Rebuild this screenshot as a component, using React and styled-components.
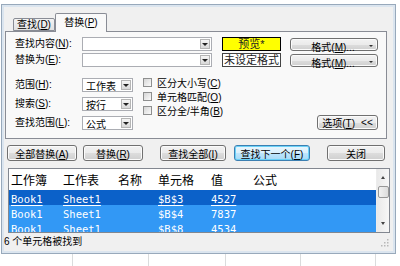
import React from 'react';
import styled, { createGlobalStyle } from 'styled-components';

const GlobalStyle = createGlobalStyle`
  * { box-sizing: border-box; }
  html, body { margin: 0; padding: 0; background: #fff; }
  body {
    width: 400px;
    height: 266px;
    overflow: hidden;
    font-family: "Liberation Sans", "Noto Sans CJK SC", sans-serif;
    color: #000;
  }
  u { text-decoration-thickness: 1px; text-underline-offset: 1px; }
`;

const results = [
  { book: 'Book1', sheet: 'Sheet1', name: '', cell: '$B$3', value: '4527', active: true },
  { book: 'Book1', sheet: 'Sheet1', name: '', cell: '$B$4', value: '7837' },
  { book: 'Book1', sheet: 'Sheet1', name: '', cell: '$B$8', value: '4534' },
];

const Page = styled.div`
  width: 400px;
  height: 266px;
  display: flex;
  flex-direction: column;
  background: #fff;
`;

const Window = styled.div`
  margin: 4px 0 0 1px;
  width: 395px;
  height: 250px;
  flex-shrink: 0;
  border: 1px solid #98a9bb;
  box-shadow: inset 0 0 0 2px #dbe5ef;
  background: #f0f0f0;
  padding: 8px 5px 0 3px;
  display: flex;
  flex-direction: column;
`;

const TabRow = styled.div`
  display: flex;
  align-items: flex-end;
  height: 18px;
  padding-left: 8px;
  position: relative;
  z-index: 1;
`;

const Tab = styled.div`
  height: ${p => (p.$active ? '19px' : '13px')};
  width: ${p => (p.$active ? '52px' : '42px')};
  margin-bottom: ${p => (p.$active ? '-1px' : '0')};
  border: 1px solid #898c95;
  border-bottom: ${p => (p.$active ? 'none' : '1px solid #898c95')};
  border-radius: 2px 2px 0 0;
  background: ${p => (p.$active ? '#f9f9f9' : 'linear-gradient(#f3f3f3, #e1e1e1)')};
  font-size: 10px;
  line-height: 1;
  display: flex;
  align-items: ${p => (p.$active ? 'flex-start' : 'center')};
  padding-top: ${p => (p.$active ? '4px' : '0')};
  justify-content: center;
`;

const Panel = styled.div`
  margin-right: 3px;
  height: 108px;
  border: 1px solid #898c95;
  background: #f9f9f9;
  padding: 5px 8px 0 9px;
`;

const TopGrid = styled.div`
  display: grid;
  grid-template-columns: 67px 130px 69px 97px;
  grid-auto-rows: 14px;
  row-gap: 2px;
  align-items: center;
`;

const Label = styled.span`
  font-size: 10px;
  line-height: 14px;
  white-space: nowrap;
`;

const Combo = styled.div`
  height: 14px;
  border: 1px solid #abadb3;
  background: #fff;
  display: flex;
  align-items: center;
  justify-content: space-between;
  padding: 0 1px 0 3px;
  font-size: 10px;
`;

const DropBtn = styled.span`
  width: 10px;
  height: 10px;
  border: 1px solid #b5b5b5;
  background: linear-gradient(#f6f6f6, #d8d8d8);
  display: flex;
  align-items: center;
  justify-content: center;
  &::after {
    content: '';
    border-left: 3px solid transparent;
    border-right: 3px solid transparent;
    border-top: 3px solid #222;
  }
`;

const FormatBox = styled.div`
  justify-self: end;
  width: 59px;
  height: 14px;
  border: 1px solid ${p => (p.$preview ? '#000' : '#444')};
  background: ${p => (p.$preview ? '#ffff00' : '#fff')};
  color: #222;
  font-size: 11px;
  line-height: 12px;
  text-align: center;
`;

const Button = styled.div`
  height: ${p => p.$h || 16}px;
  width: ${p => p.$w}px;
  margin-left: ${p => p.$ml || 0}px;
  border: 1px solid ${p => (p.$default ? '#3c7fb1' : '#707070')};
  border-radius: 3px;
  background: ${p =>
    p.$default
      ? 'linear-gradient(#eaf6fd 0%, #d9f0fc 50%, #bee6fd 51%, #a7d9f5 100%)'
      : 'linear-gradient(#f2f2f2 0%, #ebebeb 50%, #dddddd 51%, #cfcfcf 100%)'};
  box-shadow: inset 0 0 0 1px ${p => (p.$default ? '#6ad2f8' : '#fbfbfb')};
  font-size: 10px;
  display: flex;
  align-items: center;
  justify-content: center;
  white-space: nowrap;
`;

const FormatButton = styled(Button)`
  justify-self: end;
  display: grid;
  grid-template-columns: 1fr 8px;
  text-align: center;
  padding-left: 6px;
`;

const Caret = styled.span`
  width: 0;
  height: 0;
  border-left: 2px solid transparent;
  border-right: 2px solid transparent;
  border-top: 2px solid #333;
`;

const Lower = styled.div`
  display: flex;
  margin-top: 11px;
`;

const LeftGrid = styled.div`
  display: grid;
  grid-template-columns: 67px 51px;
  grid-auto-rows: 14px;
  row-gap: 5px;
  align-items: center;
`;

const Checks = styled.div`
  display: flex;
  flex-direction: column;
  margin: -3px 0 0 10px;
`;

const CheckRow = styled.label`
  height: 14px;
  display: flex;
  align-items: center;
  gap: 5px;
  font-size: 10px;
  white-space: nowrap;
`;

const Box = styled.span`
  width: 9px;
  height: 9px;
  border: 1px solid #8e8f8f;
  background: linear-gradient(135deg, #d6d6d6, #fbfbfb);
`;

const OptionsButton = styled(Button)`
  margin-left: auto;
  align-self: flex-end;
  gap: 6px;
`;

const ButtonRow = styled.div`
  display: flex;
  margin-top: 6px;
  padding-left: 2px;
`;

const List = styled.div`
  margin: 7px 0 0 3px;
  height: 65px;
  border: 1px solid #828790;
  background: #fff;
  display: flex;
  overflow: hidden;
`;

const Table = styled.div`
  flex: 1;
  overflow: hidden;
`;

const Row = styled.div`
  display: grid;
  grid-template-columns: 52px 55px 40px 53px 42px 1fr;
  height: ${p => (p.$head ? 21 : 15)}px;
  align-items: center;
  background: ${p => (p.$head ? '#fff' : p.$active ? '#0b61c9' : '#3298f5')};
  color: ${p => (p.$head ? '#000' : '#fff')};
`;

const HeadCell = styled.span`
  font-family: "Noto Sans CJK SC", sans-serif;
  font-size: 12px;
  padding-left: 2px;
`;

const Cell = styled.span`
  font-family: "DejaVu Sans Mono", "Liberation Mono", monospace;
  font-size: 10.5px;
  line-height: 15px;
  padding: 2px 0 0 2px;
  text-decoration: ${p => (p.$link ? 'underline' : 'none')};
  text-underline-offset: 2px;
`;

const ScrollBar = styled.div`
  width: 13px;
  background: linear-gradient(90deg, #e9e9e9, #f7f7f7);
  border-left: 1px solid #ececec;
  display: flex;
  flex-direction: column;
  align-items: center;
`;

const Arrow = styled.div`
  height: 17px;
  width: 100%;
  display: flex;
  align-items: center;
  justify-content: center;
  &::after {
    content: '';
    border-left: 2.5px solid transparent;
    border-right: 2.5px solid transparent;
    ${p => (p.$up ? 'border-bottom: 3px solid #444;' : 'border-top: 3px solid #444;')}
  }
`;

const Thumb = styled.div`
  width: 11px;
  height: 12px;
  border: 1px solid #979797;
  border-radius: 2px;
  background: linear-gradient(90deg, #f2f2f2, #dcdcdc);
`;

const Spacer = styled.div`
  flex: 1;
`;

const StatusBar = styled.div`
  margin-left: -3px;
  height: 14px;
  padding-left: 2px;
  display: flex;
  align-items: center;
  justify-content: space-between;
  font-size: 10px;
`;

const Grip = styled.svg`
  margin: 6px 0 0 0;
`;

const SheetStrip = styled.div`
  flex: 1;
  display: grid;
  grid-template-columns: 73px 76px 77px 75px 75px 1fr;
`;

const SheetCell = styled.div`
  border-right: 1px solid #dadcdd;
  &:last-child { border-right: none; }
`;

const Key = ({ k }) => (
  <>
    (<u>{k}</u>)
  </>
);

export default function App() {
  return (
    <Page>
      <GlobalStyle />
      <Window>
        <TabRow>
          <Tab><span>查找<Key k="D" /></span></Tab>
          <Tab $active><span>替换<Key k="P" /></span></Tab>
        </TabRow>
        <Panel>
          <TopGrid>
            <Label>查找内容<Key k="N" />:</Label>
            <Combo><span /><DropBtn /></Combo>
            <FormatBox $preview>预览*</FormatBox>
            <FormatButton $w={88} $h={13}><span>格式<Key k="M" />...</span><Caret /></FormatButton>
            <Label>替换为<Key k="E" />:</Label>
            <Combo><span /><DropBtn /></Combo>
            <FormatBox>未设定格式</FormatBox>
            <FormatButton $w={88} $h={13}><span>格式<Key k="M" />...</span><Caret /></FormatButton>
          </TopGrid>
          <Lower>
            <LeftGrid>
              <Label>范围<Key k="H" />:</Label>
              <Combo>工作表<DropBtn /></Combo>
              <Label>搜索<Key k="S" />:</Label>
              <Combo>按行<DropBtn /></Combo>
              <Label>查找范围<Key k="L" />:</Label>
              <Combo>公式<DropBtn /></Combo>
            </LeftGrid>
            <Checks>
              <CheckRow><Box /><span>区分大小写<Key k="C" /></span></CheckRow>
              <CheckRow><Box /><span>单元格匹配<Key k="O" /></span></CheckRow>
              <CheckRow><Box /><span>区分全/半角<Key k="B" /></span></CheckRow>
            </Checks>
            <OptionsButton $w={61} $h={15}>
              <span>选项<Key k="T" /></span>
              <span>&lt;&lt;</span>
            </OptionsButton>
          </Lower>
        </Panel>
        <ButtonRow>
          <Button $w={70}><span>全部替换<Key k="A" /></span></Button>
          <Button $w={60} $ml={6}><span>替换<Key k="R" /></span></Button>
          <Button $w={66} $ml={17}><span>查找全部<Key k="I" /></span></Button>
          <Button $w={76} $ml={8} $default><span>查找下一个<Key k="F" /></span></Button>
          <Button $w={58} $ml={17}>关闭</Button>
        </ButtonRow>
        <List>
          <Table>
            <Row $head>
              <HeadCell>工作簿</HeadCell>
              <HeadCell>工作表</HeadCell>
              <HeadCell>名称</HeadCell>
              <HeadCell>单元格</HeadCell>
              <HeadCell>值</HeadCell>
              <HeadCell>公式</HeadCell>
            </Row>
            {results.map((r, i) => (
              <Row key={i} $active={r.active}>
                <Cell $link={r.active}>{r.book}</Cell>
                <Cell $link={r.active}>{r.sheet}</Cell>
                <Cell>{r.name}</Cell>
                <Cell $link={r.active}>{r.cell}</Cell>
                <Cell $link={r.active}>{r.value}</Cell>
                <Cell />
              </Row>
            ))}
          </Table>
          <ScrollBar>
            <Arrow $up />
            <Thumb />
            <Spacer />
            <Arrow />
          </ScrollBar>
        </List>
        <StatusBar>
          <span>6 个单元格被找到</span>
          <Grip width="10" height="8" viewBox="0 0 10 8">
            <rect x="7" y="0" width="1.5" height="1.5" fill="#b8b8b8" />
            <rect x="4" y="3" width="1.5" height="1.5" fill="#b8b8b8" />
            <rect x="7" y="3" width="1.5" height="1.5" fill="#b8b8b8" />
            <rect x="1" y="6" width="1.5" height="1.5" fill="#b8b8b8" />
            <rect x="4" y="6" width="1.5" height="1.5" fill="#b8b8b8" />
            <rect x="7" y="6" width="1.5" height="1.5" fill="#b8b8b8" />
          </Grip>
        </StatusBar>
      </Window>
      <SheetStrip>
        <SheetCell />
        <SheetCell />
        <SheetCell />
        <SheetCell />
        <SheetCell />
        <SheetCell />
      </SheetStrip>
    </Page>
  );
}
